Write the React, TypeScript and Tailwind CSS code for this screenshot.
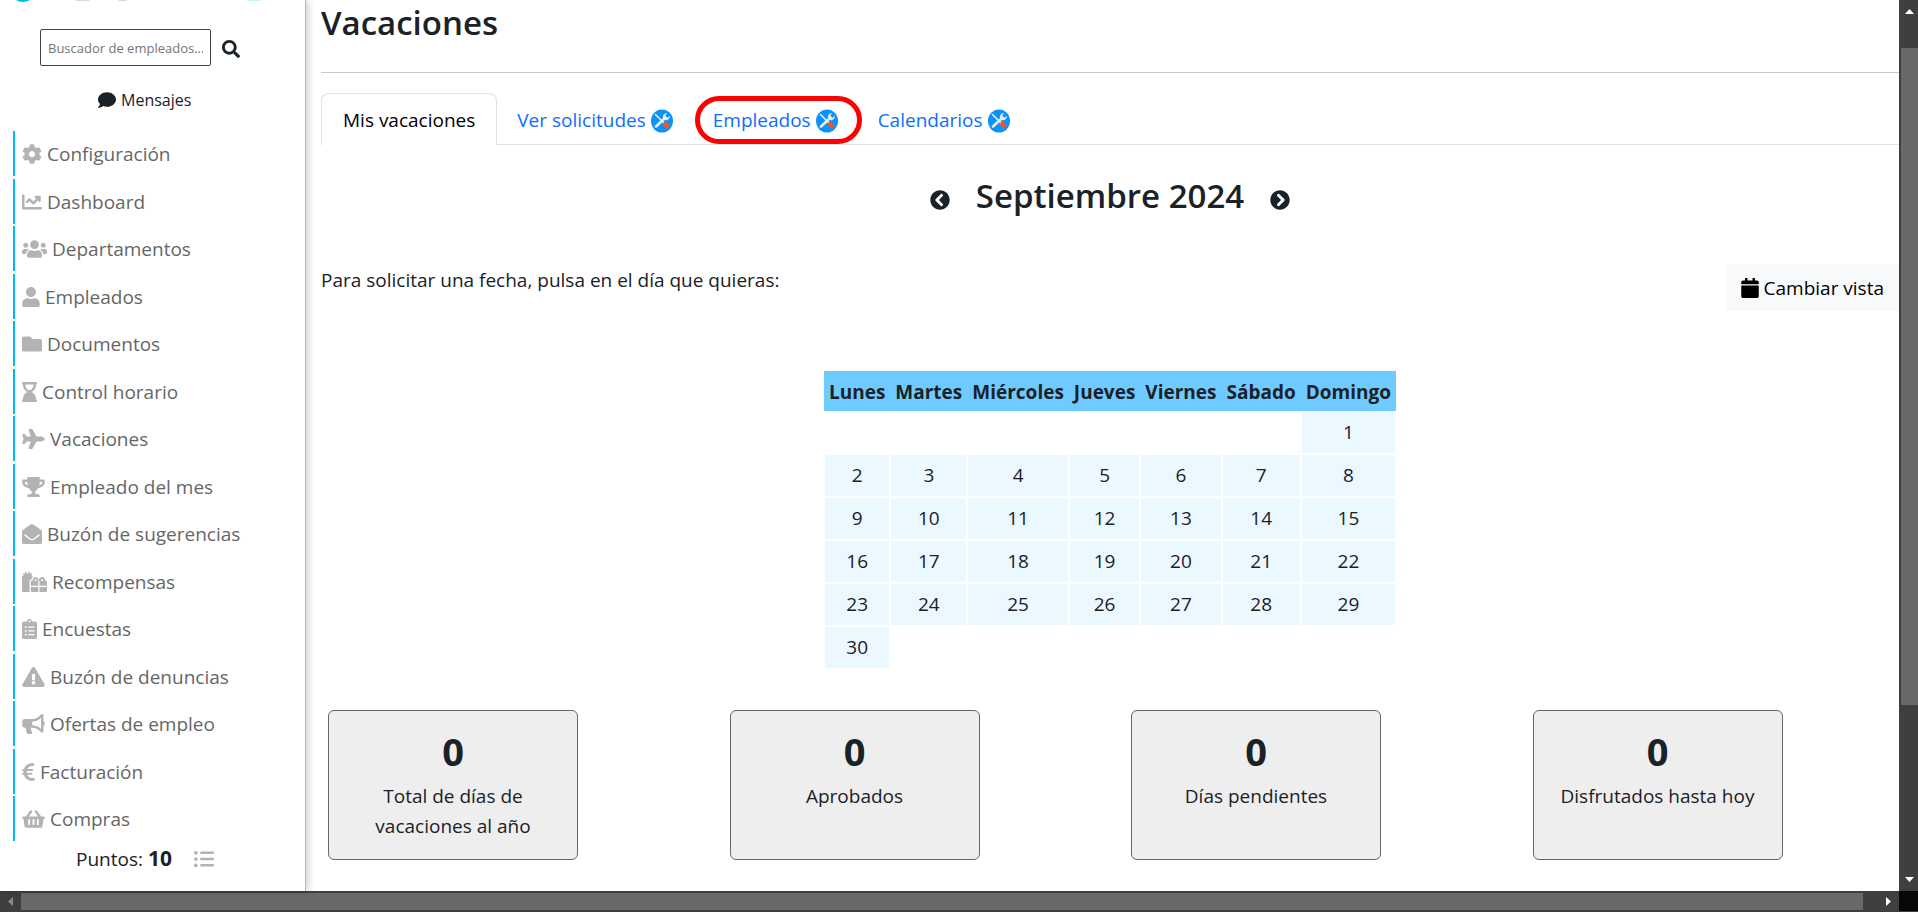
import type { IconType } from "react-icons";
import {
  FaBullhorn,
  FaCalendar,
  FaChartLine,
  FaChevronCircleLeft,
  FaChevronCircleRight,
  FaClipboardList,
  FaCog,
  FaComment,
  FaEnvelopeOpen,
  FaEuroSign,
  FaExclamationTriangle,
  FaFolder,
  FaGifts,
  FaHourglassEnd,
  FaListUl,
  FaPlane,
  FaSearch,
  FaShoppingBasket,
  FaTrophy,
  FaUser,
  FaUsers,
} from "react-icons/fa";

const menu: { label: string; icon: IconType; width: string }[] = [
  { label: "Configuración", icon: FaCog, width: "w-5" },
  { label: "Dashboard", icon: FaChartLine, width: "w-5" },
  { label: "Departamentos", icon: FaUsers, width: "w-[25px]" },
  { label: "Empleados", icon: FaUser, width: "w-[18px]" },
  { label: "Documentos", icon: FaFolder, width: "w-5" },
  { label: "Control horario", icon: FaHourglassEnd, width: "w-[15px]" },
  { label: "Vacaciones", icon: FaPlane, width: "w-[23px]" },
  { label: "Empleado del mes", icon: FaTrophy, width: "w-[23px]" },
  { label: "Buzón de sugerencias", icon: FaEnvelopeOpen, width: "w-5" },
  { label: "Recompensas", icon: FaGifts, width: "w-[25px]" },
  { label: "Encuestas", icon: FaClipboardList, width: "w-[15px]" },
  { label: "Buzón de denuncias", icon: FaExclamationTriangle, width: "w-[23px]" },
  { label: "Ofertas de empleo", icon: FaBullhorn, width: "w-[23px]" },
  { label: "Facturación", icon: FaEuroSign, width: "w-[13px]" },
  { label: "Compras", icon: FaShoppingBasket, width: "w-[23px]" },
];

const tabs = [
  { label: "Ver solicitudes", highlighted: false },
  { label: "Empleados", highlighted: true },
  { label: "Calendarios", highlighted: false },
];

const weekdays = ["Lunes", "Martes", "Miércoles", "Jueves", "Viernes", "Sábado", "Domingo"];

// September 2024 starts on a Sunday
const weeks = Array.from({ length: 6 }, (_, week) =>
  Array.from({ length: 7 }, (_, day) => {
    const date = week * 7 + day - 5;
    return date >= 1 && date <= 30 ? date : null;
  }),
);

const stats = [
  { label: "Total de días de vacaciones al año", value: 0 },
  { label: "Aprobados", value: 0 },
  { label: "Días pendientes", value: 0 },
  { label: "Disfrutados hasta hoy", value: 0 },
];

function ToolsBadge() {
  return (
    <svg viewBox="0 0 22 24" className="h-6 w-[22px]" aria-hidden="true">
      <ellipse cx="11" cy="12" rx="11" ry="11.5" fill="#0a94fb" />
      <path d="m4.500 5.500 8 8" stroke="#e8eef2" strokeWidth="1.600" strokeLinecap="round" />
      <path d="M5 17.500 14.500 8.500" stroke="#e8eef2" strokeWidth="2.600" strokeLinecap="round" />
      <path
        d="M18.800 6.800 16.500 8.800l-1.900-.4-.4-1.900 2.100-2.300a3.900 3.900 0 0 0-4.300 5l1.900 1.900a3.900 3.900 0 0 0 4.900-4.300z"
        fill="#e8eef2"
      />
      <path d="m12.800 13.800 4.700 4.500" stroke="#f0532d" strokeWidth="4.400" />
    </svg>
  );
}

function Sidebar() {
  return (
    <aside className="relative z-10 flex w-[306px] shrink-0 flex-col border-r border-[#b5b5b5] bg-white shadow-[2px_0_8px_rgba(0,0,0,0.2)]">
      <svg viewBox="0 0 306 3" className="h-[3px] w-full shrink-0" aria-hidden="true">
        <ellipse cx="23" cy="-5" rx="10" ry="7" fill="#00b9f2" />
        <path d="M76 0h14v1H76zM119 0h8v1h-8z" fill="#cfdbe6" />
        <path d="M249 0h13v1h-13z" fill="#c9f1fc" />
      </svg>

      <form className="mt-[26px] flex items-center gap-[11px] pl-10" onSubmit={(e) => e.preventDefault()}>
        <input
          type="text"
          aria-label="Buscador de empleados"
          placeholder="Buscador de empleados..."
          className="h-[37px] w-[171px] rounded-xs border border-[#444] px-[7px] text-[13px] placeholder:text-[#757575]"
        />
        <button type="submit" aria-label="Buscar" className="pt-0.5">
          <FaSearch className="size-[18px]" />
        </button>
      </form>

      <a href="#mensajes" className="mt-5 flex h-7 items-center gap-[5px] pl-[98px] text-[16px]">
        <FaComment className="size-[18px]" />
        Mensajes
      </a>

      <nav className="mt-[17px] pl-[13px]">
        {menu.map(({ label, icon: Icon, width }) => (
          <a
            key={label}
            href="#menu"
            className="mb-0.5 flex h-[45px] items-center gap-[5px] border-l-2 border-[#00b9f2] pl-[7px] text-[19px] text-[#666] odd:mb-[3px]"
          >
            <Icon className={`h-5 text-[#b3b3b3] ${width}`} />
            <span className="pt-0.5">{label}</span>
          </a>
        ))}
      </nav>

      <div className="flex h-[30px] items-center pl-[76px] text-[19px]">
        Puntos:
        <strong className="ml-[5px] text-[21px]">10</strong>
        <button type="button" aria-label="Ver puntos" className="ml-[22px]">
          <FaListUl className="size-5 text-[#b3b3b3]" />
        </button>
      </div>
    </aside>
  );
}

function Calendar() {
  return (
    <table className="mx-auto mt-[60px] border-separate border-spacing-0 text-center">
      <thead>
        <tr className="bg-[#6fcbff]">
          {weekdays.map((day) => (
            <th key={day} className="h-10 px-[5px] pt-0.5 font-bold">
              {day}
            </th>
          ))}
        </tr>
      </thead>
      <tbody>
        {weeks.map((week, i) => (
          <tr key={i}>
            {week.map((date, j) => (
              <td key={j} className={date ? "h-[43px] border border-white bg-[#ecf8ff]" : "h-[43px]"}>
                {date}
              </td>
            ))}
          </tr>
        ))}
      </tbody>
    </table>
  );
}

function Main() {
  return (
    <main className="min-w-0 flex-1 pl-[15px]">
      <h1 className="flex h-[73px] items-start border-b border-[#c8c9ca] text-[33px] leading-[46px] font-semibold">
        Vacaciones
      </h1>

      <div className="mt-5 flex h-[52px] items-stretch border-b border-[#dee2e6]">
        <a
          href="#mis-vacaciones"
          className="-mb-px flex items-center rounded-t-lg border border-b-0 border-[#dee2e6] bg-white px-[21px] pt-0.5 text-black"
        >
          Mis vacaciones
        </a>
        {tabs.map(({ label, highlighted }) => (
          <a key={label} href="#tab" className="relative flex items-center gap-[5px] px-5 pt-1 text-[#0d6efd]">
            {label}
            <ToolsBadge />
            {highlighted && (
              <span className="absolute top-[3px] -right-1 bottom-0 left-0.5 rounded-[24px] border-[5px] border-[#fe0000]" />
            )}
          </a>
        ))}
      </div>

      <div className="mt-[27px] flex h-12 items-center justify-center gap-[26px]">
        <button type="button" aria-label="Mes anterior" className="pt-2">
          <FaChevronCircleLeft className="size-5" />
        </button>
        <h2 className="text-[33px] font-semibold">Septiembre 2024</h2>
        <button type="button" aria-label="Mes siguiente" className="pt-2">
          <FaChevronCircleRight className="size-5" />
        </button>
      </div>

      <div className="mt-11 flex items-start justify-between">
        <p className="leading-8">Para solicitar una fecha, pulsa en el día que quieras:</p>
        <button type="button" className="flex h-[47px] items-center gap-[5px] bg-[#f8f9fa] px-[15px] text-black">
          <FaCalendar className="h-5 w-[18px]" />
          <span className="pt-0.5">Cambiar vista</span>
        </button>
      </div>

      <Calendar />

      {/* the row runs under the scrollbar by one gutter */}
      <div className="mt-[41px] -mr-7 grid grid-cols-4">
        {stats.map(({ label, value }) => (
          <section
            key={label}
            className="ml-[7px] flex h-[150px] w-[250px] flex-col items-center rounded-md border border-[#666] bg-[#eee] px-5 pt-4 text-center"
          >
            <strong className="text-[38px] leading-[48px]">{value}</strong>
            <span className="mt-1.5 leading-[30px]">{label}</span>
          </section>
        ))}
      </div>
    </main>
  );
}

function VerticalScrollbar() {
  return (
    <div className="relative flex w-[19px] shrink-0 flex-col bg-[#3f3f3f] pl-0.5" aria-hidden="true">
      <svg viewBox="0 0 17 48" className="h-12 w-[17px] shrink-0">
        <path d="M4 14 8.500 9 13 14z" fill="#fff" />
      </svg>
      <div className="h-[657px] bg-[#696969]" />
      <svg viewBox="0 0 17 25" className="mt-auto h-[25px] w-[17px] shrink-0">
        <path d="M4 11h9l-4.500 5z" fill="#fff" />
      </svg>
    </div>
  );
}

function HorizontalScrollbar() {
  return (
    <div className="flex h-[21px] shrink-0 bg-[#3f3f3f]" aria-hidden="true">
      <svg viewBox="0 0 21 21" className="size-[21px] shrink-0">
        <path d="M13 6v9l-5-4.500z" fill="#8a8a8a" />
      </svg>
      <div className="my-0.5 flex-1 bg-[#696969]" />
      <svg viewBox="0 0 36 21" className="h-[21px] w-9 shrink-0">
        <path d="M23 6v9l5-4.500z" fill="#fff" />
      </svg>
      <div className="mb-px w-[19px] bg-[#080808]" />
    </div>
  );
}

export default function App() {
  return (
    <div className="flex h-screen flex-col overflow-hidden bg-white font-['Open_Sans','Noto_Sans',sans-serif] text-[19px] text-[#1a2127]">
      <div className="flex min-h-0 flex-1">
        <Sidebar />
        <Main />
        <VerticalScrollbar />
      </div>
      <HorizontalScrollbar />
    </div>
  );
}
